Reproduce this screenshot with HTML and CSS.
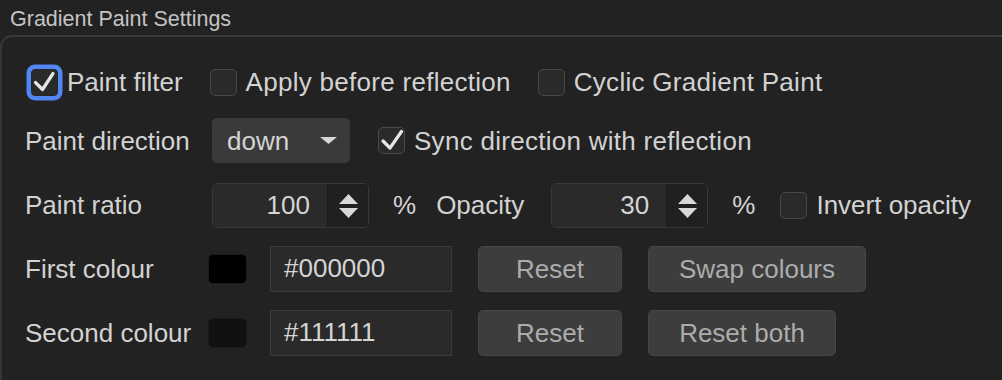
FILE: index.html
```html
<!DOCTYPE html>
<html>
<head>
<meta charset="utf-8">
<link rel="stylesheet" href="styles.css">
</head>
<body>
<div class="title">Gradient Paint Settings</div>
<div class="group">
  <div class="row row-first">
    <span class="check checked focused"><svg viewBox="0 0 27 27"><polyline points="4.5,14.5 11.5,21.5 22,5.5"/></svg></span>
    <span class="text">Paint filter</span>
    <span class="check gap-l"></span>
    <span class="text wide">Apply before reflection</span>
    <span class="check gap-l"></span>
    <span class="text wide">Cyclic Gradient Paint</span>
  </div>
  <div class="row row-2">
    <span class="label">Paint direction</span>
    <span class="combo">down<svg class="combo-arrow" viewBox="0 0 17 7"><polygon points="0,0 17,0 8.5,7"/></svg></span>
    <span class="check checked gap-l"><svg viewBox="0 0 27 27"><polyline points="5,14 12,21 23.5,4.5"/></svg></span>
    <span class="text wide">Sync direction with reflection</span>
  </div>
  <div class="row">
    <span class="label">Paint ratio</span>
    <span class="spin">
      <span class="spin-field">100</span>
      <span class="spin-btn"><svg viewBox="0 0 19 24"><polygon points="9.5,0 19,10 0,10"/><polygon points="0,14 19,14 9.5,24"/></svg></span>
    </span>
    <span class="text pct">%</span>
    <span class="text opacity">Opacity</span>
    <span class="spin spin-2">
      <span class="spin-field">30</span>
      <span class="spin-btn"><svg viewBox="0 0 19 24"><polygon points="9.5,0 19,10 0,10"/><polygon points="0,14 19,14 9.5,24"/></svg></span>
    </span>
    <span class="text pct">%</span>
    <span class="check gap-m"></span>
    <span class="text">Invert opacity</span>
  </div>
  <div class="row">
    <span class="label label-c">First colour</span>
    <span class="swatch swatch-black"></span>
    <span class="field">#000000</span>
    <span class="btn btn-reset">Reset</span>
    <span class="btn btn-swap">Swap colours</span>
  </div>
  <div class="row row-last">
    <span class="label label-c">Second colour</span>
    <span class="swatch swatch-dark"></span>
    <span class="field">#111111</span>
    <span class="btn btn-reset">Reset</span>
    <span class="btn btn-both">Reset both</span>
  </div>
</div>
</body>
</html>
```

FILE: styles.css
```css
html, body {
  margin: 0;
  padding: 0;
  background: #222222;
  overflow: hidden;
  width: 1002px;
  height: 380px;
}
body {
  font-family: "Liberation Sans", Arial, sans-serif;
  color: #d2d2d2;
  font-size: 26px;
}
.title {
  height: 35px;
  box-sizing: border-box;
  padding-left: 10px;
  padding-top: 7px;
  font-size: 21.5px;
  line-height: 24px;
  color: #c4c4c4;
}
.group {
  border-top: 2px solid #3a3a3a;
  border-left: 2px solid #353535;
  border-top-left-radius: 12px;
  margin-right: -30px;
  height: 321px;
  padding-top: 22px;
  padding-left: 23px;
}
.row {
  display: flex;
  align-items: center;
  height: 46px;
  margin-bottom: 18px;
  white-space: nowrap;
}
.row-first {
  padding-left: 6px;
  margin-bottom: 13px;
}
.row-2 { height: 45px; margin-bottom: 19px; }
.row-last { margin-bottom: 0; }
.text { line-height: 30px; }
.wide { letter-spacing: 0.28px; }
.label {
  width: 183px;
  flex: none;
  line-height: 30px;
}
.check {
  flex: none;
  width: 27px;
  height: 27px;
  box-sizing: border-box;
  border: 1.5px solid #484848;
  background: #2a2a2a;
  border-radius: 5px;
  margin-right: 9px;
  display: flex;
}
.check svg {
  width: 100%;
  height: 100%;
  fill: none;
  stroke: #e6e6e6;
  stroke-width: 3.2;
  stroke-linecap: round;
  stroke-linejoin: round;
}
.check.checked { border-color: #4a4a4a; }
.check.focused {
  border-color: #262626;
  box-shadow: 0 0 0 4.5px #5286f3;
  border-radius: 4px;
}
.check.checked svg { margin: -1.5px; width: 27px; height: 27px; }
.gap-l { margin-left: 27px; }
.gap-m { margin-left: 25px; }
.combo {
  margin-left: 4px;
  width: 138px;
  height: 45px;
  box-sizing: border-box;
  background: #3a3a3a;
  border-radius: 5px;
  display: flex;
  align-items: center;
  padding-left: 15px;
  line-height: 30px;
  color: #d4d4d4;
  margin-right: 1px;
}
.combo-arrow {
  width: 17px;
  height: 7px;
  margin-left: auto;
  margin-right: 13px;
  fill: #d6d6d6;
}
.spin {
  margin-left: 4px;
  width: 157px;
  height: 45px;
  box-sizing: border-box;
  border: 1.5px solid #383838;
  border-radius: 5px;
  display: flex;
  overflow: hidden;
  flex: none;
}
.spin-field {
  flex: 1;
  background: #2a2a2a;
  text-align: right;
  padding-right: 17px;
  line-height: 42px;
  color: #d4d4d4;
  border-right: 1.5px solid #1d1d1d;
}
.spin-btn {
  width: 40px;
  background: #202020;
  display: flex;
  align-items: center;
  justify-content: center;
}
.spin-btn svg {
  width: 19px;
  height: 24px;
  fill: #d8d8d8;
  margin-top: 1px;
}
.spin-2 { margin-left: 27px; }
.pct { margin-left: 24px; }
.opacity { margin-left: 20px; }
.swatch {
  flex: none;
  width: 39px;
  height: 30px;
  box-sizing: border-box;
  border-radius: 5px;
  border: 1px solid #1b1b1b;
}
.swatch-black { background: #000000; }
.swatch-dark { background: #111111; }
.field {
  flex: none;
  margin-left: 23px;
  width: 182px;
  height: 46px;
  box-sizing: border-box;
  background: #2a2a2a;
  border: 1.5px solid #3b3b3b;
  padding-left: 13px;
  line-height: 43px;
  color: #d4d4d4;
}
.btn {
  flex: none;
  height: 46px;
  box-sizing: border-box;
  background: #3d3d3d;
  border: 1px solid #464646;
  border-radius: 5px;
  text-align: center;
  line-height: 44px;
  color: #acacac;
  margin-left: 26px;
}
.btn-reset { width: 144px; }
.btn-swap { width: 218px; }
.btn-both { width: 188px; }
```
